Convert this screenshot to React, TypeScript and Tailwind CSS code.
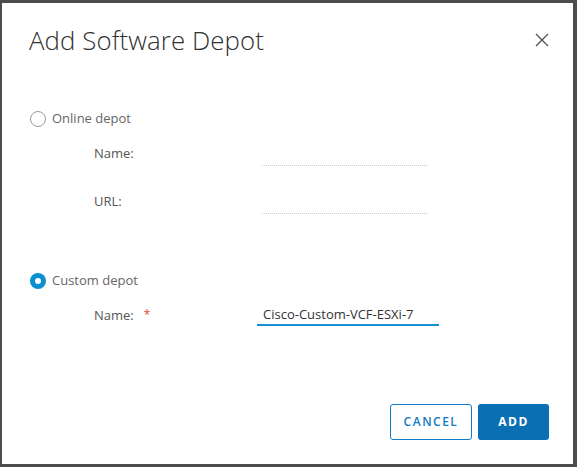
import React from "react";

export default function App() {
  const font = { fontFamily: '"Open Sans", "Liberation Sans", sans-serif' };
  return (
    <div className="w-[577px] h-[467px] bg-[#4b4d4f] pt-[3px] pl-[2px] pr-[4px] pb-[3px]" style={font}>
      <div className="w-full h-full bg-white flex flex-col">
        <div className="flex items-start justify-between pl-[27px] pr-[24px] pt-[21px]">
          <h1 className="text-[25.8px] font-light text-[#313131] leading-[32px] tracking-[0.1px]">Add Software Depot</h1>
          <svg width="14" height="14" viewBox="0 0 14 14" className="mt-[9px]">
            <path d="M1 1 L13 13 M13 1 L1 13" stroke="#565656" strokeWidth="1.4" />
          </svg>
        </div>

        <div className="flex flex-col pl-[28px] mt-[53px] text-[13px] text-[#565656]">
          <label className="flex items-center gap-[6px] h-[20px]">
            <span className="w-[16px] h-[16px] rounded-full border border-[#9a9a9a] bg-white" />
            <span className="text-[#666]">Online depot</span>
          </label>
          <div className="flex items-end mt-[9px] h-[28px]">
            <span className="w-[232px] pl-[64px] pb-[3px]">Name:</span>
            <div className="w-[165px] h-[28px] border-b border-dotted border-[#c8c8c8]" />
          </div>
          <div className="flex items-end mt-[20px] h-[28px]">
            <span className="w-[232px] pl-[64px] pb-[3px]">URL:</span>
            <div className="w-[165px] h-[28px] border-b border-dotted border-[#c8c8c8]" />
          </div>

          <label className="flex items-center gap-[6px] h-[20px] mt-[57px]">
            <span className="w-[16px] h-[16px] rounded-full bg-[#0b8fd3] flex items-center justify-center">
              <span className="w-[6px] h-[6px] rounded-full bg-white" />
            </span>
            <span className="text-[#666]">Custom depot</span>
          </label>
          <div className="flex items-end mt-[7px] h-[28px]">
            <span className="w-[227px] pl-[64px] pb-[1px] flex">
              Name:<span className="text-[#e0463a] ml-[10px] text-[12px]">*</span>
            </span>
            <div className="w-[182px] h-[28px] border-b-2 border-[#1a8ed3] pl-[6px] pt-[7px] text-[#333]">
              Cisco-Custom-VCF-ESXi-7
            </div>
          </div>
        </div>

        <div className="flex-1" />
        <div className="flex justify-end gap-[6px] pr-[24px] pb-[24px]">
          <button className="w-[82px] h-[36px] border border-[#0f7cc4] rounded-[3px] text-[#0f7cc4] text-[12px] font-semibold tracking-[1.5px]">
            CANCEL
          </button>
          <button className="w-[71px] h-[36px] bg-[#0b6fb4] rounded-[3px] text-white text-[12px] font-bold tracking-[1.5px]">
            ADD
          </button>
        </div>
      </div>
    </div>
  );
}
